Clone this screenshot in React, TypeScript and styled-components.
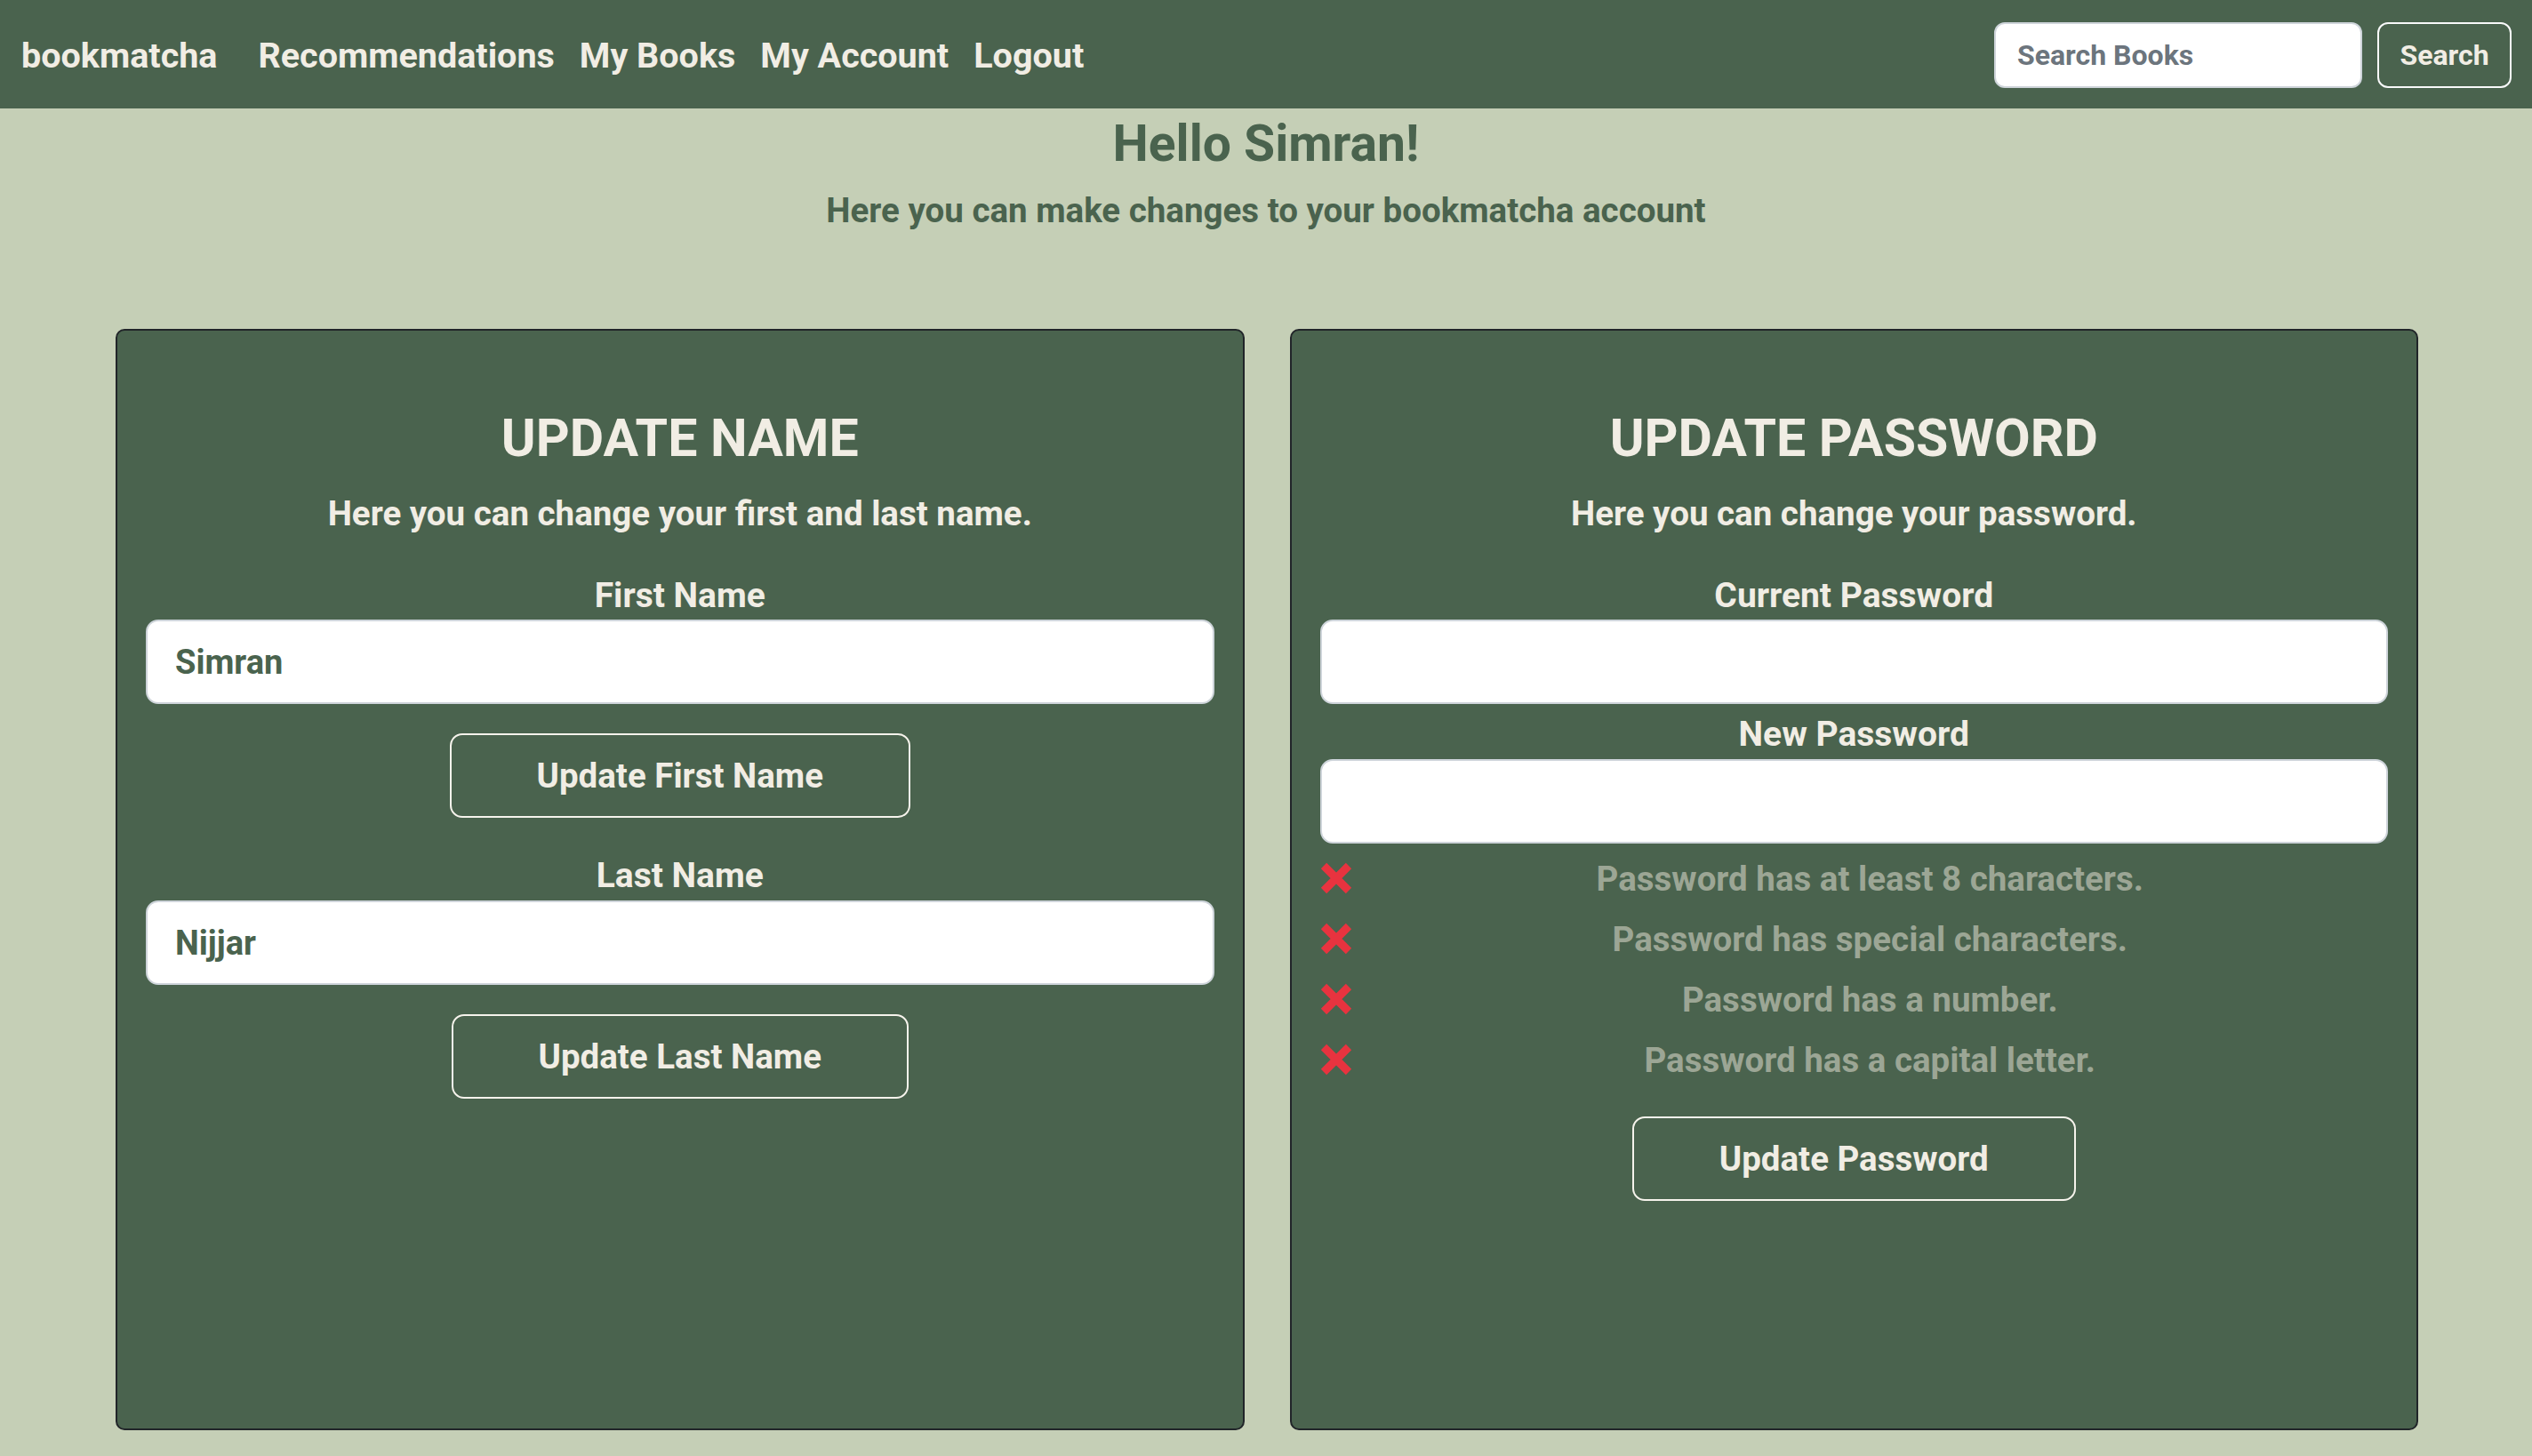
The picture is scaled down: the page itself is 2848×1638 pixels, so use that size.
import styled, { createGlobalStyle } from "styled-components";

const GlobalStyle = createGlobalStyle`
  body {
    margin: 0;
    background-color: #c5cfb6;
    font-family: Roboto, "Liberation Sans", sans-serif;
    font-weight: 700;
  }
`;

const rules = [
  "Password has at least 8 characters.",
  "Password has special characters.",
  "Password has a number.",
  "Password has a capital letter.",
];

const Cross = () => (
  <svg width="36" height="36" viewBox="0 0 36 36">
    <path d="M4 4 L32 32 M32 4 L4 32" stroke="#e8333f" strokeWidth="9" />
  </svg>
);

const App = () => {
  return (
    <>
      <GlobalStyle />
      <Nav>
        <Brand href="#">bookmatcha</Brand>
        <NavLinks>
          <NavLink href="#">Recommendations</NavLink>
          <NavLink href="#">My Books</NavLink>
          <NavLink href="#">My Account</NavLink>
          <NavLink href="#">Logout</NavLink>
        </NavLinks>
        <SearchForm onSubmit={(e) => e.preventDefault()}>
          <SearchInput type="search" placeholder="Search Books" />
          <SearchButton type="submit">Search</SearchButton>
        </SearchForm>
      </Nav>

      <main>
        <Greeting>Hello Simran!</Greeting>
        <Intro>Here you can make changes to your bookmatcha account</Intro>

        <Cards>
          <Card>
            <CardTitle>Update Name</CardTitle>
            <CardText>Here you can change your first and last name.</CardText>
            <FieldLabel $space={45}>First Name</FieldLabel>
            <TextInput defaultValue="Simran" />
            <ActionButton>Update First Name</ActionButton>
            <FieldLabel $space={42}>Last Name</FieldLabel>
            <TextInput defaultValue="Nijjar" />
            <ActionButton>Update Last Name</ActionButton>
          </Card>

          <Card>
            <CardTitle>Update Password</CardTitle>
            <CardText>Here you can change your password.</CardText>
            <FieldLabel $space={45}>Current Password</FieldLabel>
            <TextInput type="password" />
            <FieldLabel $space={11}>New Password</FieldLabel>
            <TextInput type="password" />
            <CheckList>
              {rules.map((r) => (
                <CheckItem key={r}>
                  <Cross />
                  <CheckText>{r}</CheckText>
                </CheckItem>
              ))}
            </CheckList>
            <ActionButton $space={30}>Update Password</ActionButton>
          </Card>
        </Cards>
      </main>
    </>
  );
};

export default App;

const Nav = styled.nav`
  height: 122px;
  box-sizing: border-box;
  padding: 2px 23px 0 24px;
  background-color: #4a634e;
  display: flex;
  align-items: center;
`;

const Brand = styled.a`
  color: #f1ede4;
  font-size: 39.5px;
  text-decoration: none;
  margin-right: 46px;
`;

const NavLinks = styled.div`
  display: flex;
  gap: 28px;
`;

const NavLink = styled.a`
  color: #f1ede4;
  font-size: 39.5px;
  text-decoration: none;
`;

const SearchForm = styled.form`
  margin-left: auto;
  display: flex;
  gap: 17px;
`;

const SearchInput = styled.input`
  width: 414px;
  height: 74px;
  box-sizing: border-box;
  border: 2px solid #ced4da;
  border-radius: 12px;
  padding: 0 24px;
  font-family: inherit;
  font-weight: 700;
  font-size: 32px;
  color: #4a634e;
  outline: none;

  &::placeholder {
    color: #6c757d;
  }
`;

const SearchButton = styled.button`
  width: 151px;
  height: 74px;
  border: 2px solid #f8f9fa;
  border-radius: 12px;
  background: transparent;
  color: #f1ede4;
  font-family: inherit;
  font-weight: 700;
  font-size: 32px;
`;

const Greeting = styled.h1`
  margin: 6px 0 0;
  font-size: 57px;
  line-height: 1.2;
  font-weight: 700;
  text-align: center;
  color: #4a634e;
`;

const Intro = styled.p`
  margin: 18px 0 0;
  font-size: 38.5px;
  line-height: 1.2;
  text-align: center;
  color: #4a634e;
`;

const Cards = styled.div`
  display: grid;
  grid-template-columns: 1fr 1fr;
  gap: 51px;
  padding: 0 128px 0 130px;
  margin-top: 109px;
`;

const Card = styled.section`
  height: 1239px;
  box-sizing: border-box;
  border: 2px solid #212529;
  border-radius: 10px;
  background-color: #4a634e;
  padding: 86px 32px 0;
  display: flex;
  flex-direction: column;
  align-items: center;
  text-align: center;
  color: #f1ede4;
`;

const CardTitle = styled.h2`
  margin: 0;
  font-size: 59px;
  line-height: 1.2;
  font-weight: 700;
  text-transform: uppercase;
`;

const CardText = styled.p`
  margin: 27px 0 0;
  font-size: 38.5px;
  line-height: 1.2;
`;

const FieldLabel = styled.label<{ $space: number }>`
  display: block;
  margin-top: ${(p) => p.$space}px;
  font-size: 39px;
  line-height: 1.2;
`;

const TextInput = styled.input`
  width: 100%;
  height: 95px;
  box-sizing: border-box;
  margin-top: 4px;
  padding: 0 31px;
  border: 2px solid #ced4da;
  border-radius: 14px;
  background: #fff;
  font-family: inherit;
  font-weight: 700;
  font-size: 38px;
  color: #4a634e;
  outline: none;
`;

const ActionButton = styled.button<{ $space?: number }>`
  margin-top: ${(p) => p.$space ?? 33}px;
  height: 95px;
  padding: 0 96px;
  border: 2px solid #f6f3ec;
  border-radius: 14px;
  background: transparent;
  color: #f1ede4;
  font-family: inherit;
  font-weight: 700;
  font-size: 38.5px;
`;

const CheckList = styled.ul`
  list-style: none;
  width: 100%;
  margin: 5px 0 0;
  padding: 0;
`;

const CheckItem = styled.li`
  display: flex;
  align-items: center;
  height: 68px;
`;

const CheckText = styled.span`
  flex: 1;
  text-align: center;
  font-size: 38.5px;
  color: #9ca695;
`;
